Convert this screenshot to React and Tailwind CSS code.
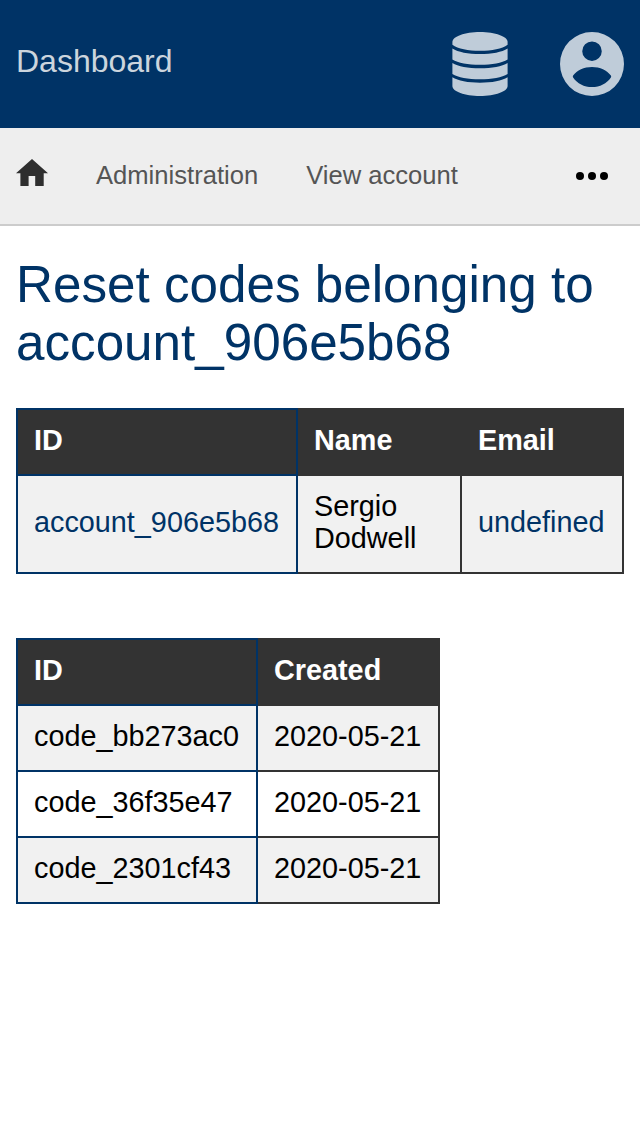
const accounts = [{ id: 'account_906e5b68', name: 'Sergio Dodwell', email: 'undefined' }]

const codes = [
  { id: 'code_bb273ac0', created: '2020-05-21' },
  { id: 'code_36f35e47', created: '2020-05-21' },
  { id: 'code_2301cf43', created: '2020-05-21' },
]

const tableClass =
  'table-fixed border-collapse text-[28.8px] leading-8 [&_td]:border-2 [&_td]:border-[#333] [&_td]:px-4 [&_td]:pt-3.5 [&_td]:pb-4.5 [&_th]:border-2 [&_th]:border-[#333] [&_th]:bg-[#333] [&_th]:px-4 [&_th]:pt-3.5 [&_th]:pb-4.5 [&_th]:text-left [&_th]:font-bold [&_th]:text-white [&_tr>*:first-child]:border-[#003366] [&_tbody_tr:nth-child(odd)]:bg-[#f1f1f1]'

function DatabaseIcon() {
  return (
    <svg viewBox="0 0 56 64" className="h-16 w-14" fill="currentColor">
      <path d="M.4 10C.4 4.500 12.800 0 28 0s27.600 4.500 27.600 10v2.700C50 16.800 40 18.700 28 18.700S6 16.800.4 12.700z" />
      <path d="M.4 16.400C6 20.100 16 21.900 28 21.900s22-1.800 27.600-5.500v11.200c-5.600 3.700-15.600 5.200-27.600 5.200S6 31.300.4 27.600z" />
      <path d="M.4 30.900C6 34.500 16 36.200 28 36.200s22-1.700 27.600-5.300v11.200c-5.600 3.700-15.600 5.200-27.600 5.200S6 45.800.4 42.100z" />
      <path d="M.4 45.300C6 48.900 16 50.700 28 50.700s22-1.800 27.600-5.400V54c0 5.500-12.400 10-27.600 10S.4 59.500.4 54z" />
    </svg>
  )
}

function AccountIcon() {
  return (
    <svg viewBox="2 2 20 20" className="size-16" fill="currentColor">
      <path
        fillRule="evenodd"
        d="M12 2a10 10 0 1 0 0 20 10 10 0 0 0 0-20zM12 4.950a3.050 3.050 0 1 1 0 6.100 3.050 3.050 0 0 1 0-6.100zM6.100 15.600C7.300 13.900 9.500 12.900 12 12.900s4.700 1 5.900 2.700q.2.300 0 .6C16.600 18.100 14.500 19.200 12 19.200s-4.600-1.100-5.900-3q-.2-.3 0-.6z"
      />
    </svg>
  )
}

export default function App() {
  return (
    <div className="min-h-[1136px] bg-white font-['Liberation_Sans',Arial,sans-serif] text-black">
      <header className="flex h-32 items-center justify-between bg-[#003366] px-4 text-[#bfccd9]">
        <a className="mb-1.5 text-[32px] leading-9 text-[#ccd5dd]">Dashboard</a>
        <div className="flex gap-[52px]">
          <DatabaseIcon />
          <AccountIcon />
        </div>
      </header>

      <nav className="flex h-[98px] items-center border-b-2 border-[#ccc] bg-[#eee] px-4 text-[25.6px] leading-[30px] text-[#555]">
        <svg viewBox="0 0 32 27" className="mb-2 h-[27px] w-8" fill="#2e2e2e">
          <path d="M16 0L32 14.200H27.700V27H19.200V17H12.600V27H4.400V14.200H0z" />
        </svg>
        <a className="mb-0.5 ml-12">Administration</a>
        <a className="mb-0.5 ml-12">View account</a>
        <button className="mr-4 ml-auto flex gap-1">
          <i className="size-2 rounded-full bg-black" />
          <i className="size-2 rounded-full bg-black" />
          <i className="size-2 rounded-full bg-black" />
        </button>
      </nav>

      <main className="px-4 pt-[30px]">
        <h1 className="text-[51.2px] leading-[58px] text-[#003366]">
          Reset codes belonging to account_906e5b68
        </h1>

        <table className={`${tableClass} mt-9 w-[608px]`}>
          <colgroup>
            <col className="w-[280px]" />
            <col className="w-[164px]" />
            <col className="w-[162px]" />
          </colgroup>
          <thead>
            <tr>
              <th>ID</th>
              <th>Name</th>
              <th>Email</th>
            </tr>
          </thead>
          <tbody>
            {accounts.map((account) => (
              <tr key={account.id}>
                <td className="text-[#003366]">{account.id}</td>
                <td>{account.name}</td>
                <td className="text-[#003366]">{account.email}</td>
              </tr>
            ))}
          </tbody>
        </table>

        <table className={`${tableClass} mt-16 w-[424px]`}>
          <colgroup>
            <col className="w-[240px]" />
            <col className="w-[182px]" />
          </colgroup>
          <thead>
            <tr>
              <th>ID</th>
              <th>Created</th>
            </tr>
          </thead>
          <tbody>
            {codes.map((code) => (
              <tr key={code.id}>
                <td>{code.id}</td>
                <td>{code.created}</td>
              </tr>
            ))}
          </tbody>
        </table>
      </main>
    </div>
  )
}
